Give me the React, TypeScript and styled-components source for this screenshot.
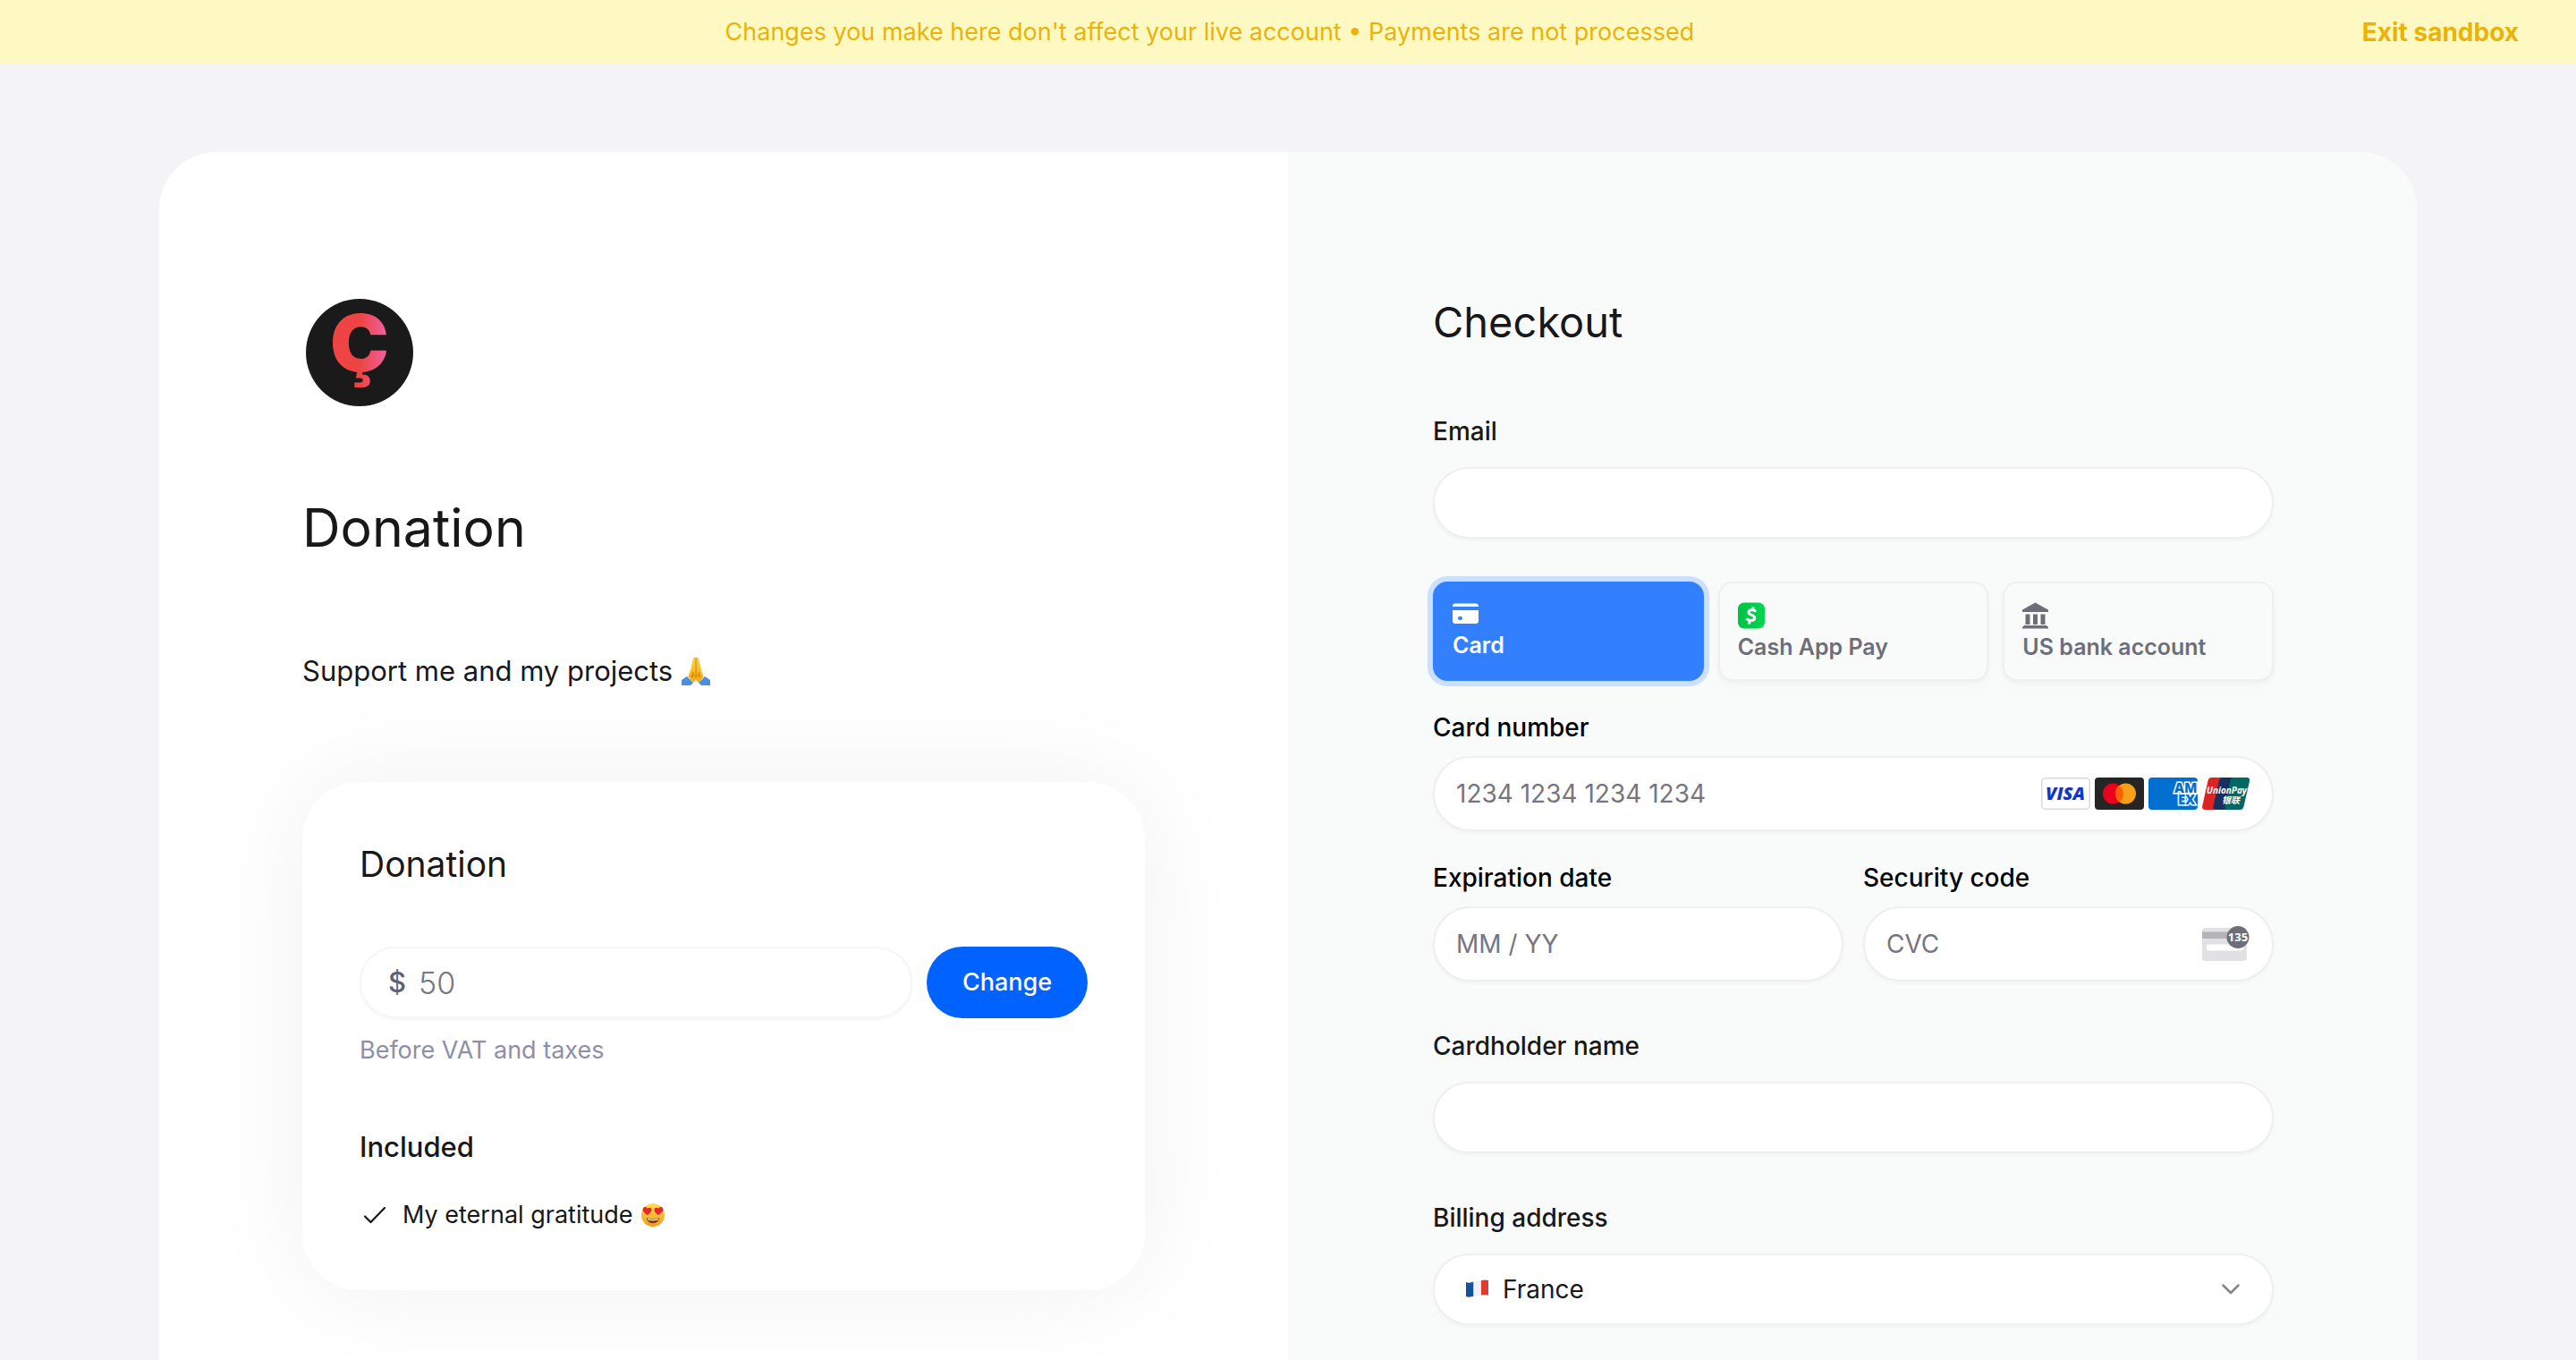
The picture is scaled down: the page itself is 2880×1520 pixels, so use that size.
import React from "react";
import styled, { createGlobalStyle, css } from "styled-components";

const color = {
  ink: "#18181b",
  muted: "#6d6e78",
  line: "#eeefee",
  blue: "#0062ff",
};

const GlobalStyle = createGlobalStyle`
  *, *::before, *::after { box-sizing: border-box; }
  body { margin: 0; background: #f4f4f6; color: ${color.ink}; font-family: Inter, "Liberation Sans", sans-serif; font-size: 28px; line-height: 40px; }
  h1, h2, h3, p, ul { margin: 0; padding: 0; }
  button, input, select { font: inherit; color: inherit; }
  svg { display: block; flex: none; }
`;

const Page = styled.div`
  display: flex;
  flex-direction: column;
  min-height: 100vh;
`;

const Banner = styled.header`
  display: flex;
  align-items: center;
  padding: 16px 64px;
  background: #fef9c3;
  color: #eab308;
`;

const BannerText = styled.p`
  flex: 1;
  font-size: 27px;
  text-align: center;
`;

const ExitLink = styled.a`
  color: inherit;
  font-weight: 700;
  text-decoration: none;
`;

const Sheet = styled.main`
  flex: 1;
  display: grid;
  grid-template-columns: repeat(2, minmax(0, 1fr));
  margin: 98px 178px 0;
  border-radius: 64px 64px 0 0;
  overflow: hidden;
`;

const Summary = styled.section`
  padding: 160px 160px 0;
  background: #fff;
`;

const Checkout = styled.section`
  padding: 162px 160px 38px 162px;
  background: #f9fbfa;
`;

const Logo = styled.svg`
  width: 128px;
  height: 128px;
  margin-bottom: 96px;
`;

const LogoLetter = styled.text`
  font-family: Inter, "Liberation Sans", sans-serif;
  font-size: 88px;
  font-weight: 900;
`;

const Title = styled.h1`
  font-size: 59px;
  line-height: 72px;
  font-weight: 400;
`;

const Description = styled.p`
  display: flex;
  align-items: center;
  gap: 10px;
  margin: 100px 0;
  font-size: 31px;
  line-height: 48px;
`;

const ProductCard = styled.article`
  padding: 64px;
  border-radius: 64px;
  background: #fff;
  box-shadow: 0 0 120px rgba(0, 0, 0, 0.06);
`;

const ProductName = styled.h2`
  margin-bottom: 64px;
  font-size: 39px;
  line-height: 56px;
  font-weight: 400;
`;

const AmountForm = styled.form`
  display: flex;
  gap: 16px;
  margin-bottom: 16px;
`;

const pill = css`
  border: 2px solid ${color.line};
  border-radius: 42px;
  background: #fff;
  box-shadow: 0 2px 4px rgba(0, 0, 0, 0.04);
`;

const AmountField = styled.label`
  ${pill}
  flex: 1;
  min-width: 0;
  height: 80px;
  display: flex;
  align-items: center;
  gap: 14px;
  padding: 0 30px;
  border-color: #f6f6f7;
  color: #5f6178;
  font-size: 31px;
  font-weight: 500;
`;

const BareInput = styled.input<{ $large?: boolean }>`
  flex: 1;
  min-width: 0;
  height: 100%;
  padding: 0;
  border: 0;
  outline: 0;
  background: none;
  font-size: ${(p) => (p.$large ? "34px" : "28px")};
  font-weight: ${(p) => (p.$large ? 300 : 400)};
  &::placeholder { color: #757680; opacity: 1; }
`;

const ChangeButton = styled.button`
  width: 180px;
  height: 80px;
  border: 0;
  border-radius: 40px;
  background: ${color.blue};
  color: #fff;
  font-size: 27px;
  font-weight: 500;
`;

const Note = styled.p`
  margin-bottom: 64px;
  color: #8b8fa9;
  font-size: 27px;
`;

const IncludedTitle = styled.h3`
  margin-bottom: 32px;
  font-size: 31px;
  line-height: 48px;
  font-weight: 500;
`;

const Benefits = styled.ul`
  list-style: none;
`;

const Benefit = styled.li`
  display: flex;
  align-items: center;
  gap: 8px;
  font-size: 27px;
`;

const BenefitIcon = styled.span`
  width: 40px;
  padding-left: 4px;
`;

const CheckoutTitle = styled.h2`
  margin-bottom: 74px;
  font-size: 47px;
  line-height: 56px;
  font-weight: 400;
`;

const Field = styled.div`
  & + & { margin-top: 52px; }
`;

const Label = styled.label`
  display: block;
  margin-bottom: 20px;
  font-size: 28px;
  font-weight: 500;
`;

const CardLabel = styled.label`
  display: block;
  margin-bottom: 12px;
  color: #000;
  font-weight: 450;
`;

const TextInput = styled.input`
  ${pill}
  display: block;
  width: 100%;
  height: 80px;
  padding: 0 32px;
`;

const Methods = styled.div`
  display: grid;
  grid-template-columns: repeat(3, minmax(0, 1fr));
  gap: 16px;
  margin: 48px 0 32px;
`;

const Method = styled.button<{ $active?: boolean }>`
  display: flex;
  flex-direction: column;
  gap: 6px;
  padding: 21px 20px 22px;
  border: 2px solid ${color.line};
  border-radius: 16px;
  background: #f9fbfa;
  box-shadow: 0 2px 4px rgba(0, 0, 0, 0.03), 0 6px 12px rgba(0, 0, 0, 0.02);
  color: ${color.muted};
  font-size: 25px;
  line-height: 28px;
  font-weight: 600;
  text-align: left;
  ${(p) =>
    p.$active &&
    css`
      gap: 4px;
      border-color: #3380ff;
      background: #3380ff;
      color: #fff;
      box-shadow: 0 0 0 6px #ccdfff;
    `}
`;

const CardFields = styled.div`
  display: grid;
  grid-template-columns: repeat(2, minmax(0, 1fr));
  gap: 32px 22px;
  margin-bottom: 52px;
`;

const CardField = styled.div<{ $wide?: boolean }>`
  grid-column: ${(p) => (p.$wide ? "1 / -1" : "auto")};
`;

const CardBox = styled.div`
  ${pill}
  height: 84px;
  display: flex;
  align-items: center;
  padding: 0 24px;
`;

const Brands = styled.div`
  display: flex;
  gap: 5px;
`;

const CountryBox = styled.div`
  ${pill}
  height: 80px;
  display: flex;
  align-items: center;
  padding: 0 36px 0 32px;
`;

const CountrySelect = styled.select`
  flex: 1;
  height: 100%;
  margin-left: 12px;
  padding: 0;
  border: 0;
  outline: 0;
  background: none;
  appearance: none;
`;

const MarkText = styled.text<{ $size: number; $weight?: number; $italic?: boolean }>`
  font-family: "Open Sans", "Noto Sans CJK SC", sans-serif;
  font-size: ${(p) => p.$size}px;
  font-weight: ${(p) => p.$weight ?? 700};
  font-style: ${(p) => (p.$italic ? "italic" : "normal")};
`;

function BrandLogo() {
  return (
    <Logo viewBox="0 0 128 128" role="img" aria-label="Ç">
      <defs>
        <linearGradient id="logo-ink" x1="0" x2="1">
          <stop offset="0.52" stopColor="#ef4444" />
          <stop offset="1" stopColor="#f064a8" />
        </linearGradient>
      </defs>
      <circle cx="64" cy="64" r="60" fill="#1a1a1a" />
      <LogoLetter x="64" y="85" textAnchor="middle" fill="url(#logo-ink)">Ç</LogoLetter>
    </Logo>
  );
}

function PrayingHands() {
  return (
    <svg width="32" height="32" viewBox="0 0 32 32" role="img" aria-label="🙏">
      <defs>
        <linearGradient id="hand" x1="0" x2="0" y1="0" y2="1">
          <stop offset="0" stopColor="#ffd13b" />
          <stop offset="1" stopColor="#f7a90c" />
        </linearGradient>
      </defs>
      <path d="M0 26 6 22l7 7-3 3H0zM32 26l-6-4-7 7 3 3h10z" fill="#4a90dc" />
      <path d="M15.7 1c-1.400-1-2.500 0-2.800 1.600L10.500 13 7.500 22.500l5.500 6.500 3-3.500zM16.300 1c1.400-1 2.500 0 2.800 1.600L21.500 13l3 9.500-5.500 6.500-3-3.500z" fill="url(#hand)" />
      <path d="M16 1v23M13 17l-1.500 6 3.500-3M19 17l1.500 6-3.500-3" fill="none" stroke="#c87800" strokeWidth="1" />
    </svg>
  );
}

function HeartEyes() {
  return (
    <svg width="28" height="28" viewBox="0 0 28 28" role="img" aria-label="😍">
      <defs>
        <linearGradient id="face" x1="0" x2="0" y1="0" y2="1">
          <stop offset="0" stopColor="#ffe04d" />
          <stop offset="1" stopColor="#f39a1e" />
        </linearGradient>
      </defs>
      <circle cx="14" cy="14" r="13" fill="url(#face)" />
      <path d="M8 14C3 11 2 8.500 3 6.500c1.200-2.200 4-1.700 4.800.300C9.500 4.800 12.500 5.500 12.500 8c0 2.400-2 4.200-4.500 6z" fill="#e8262d" />
      <path d="M20 14c5-3 6-5.500 5-7.500-1.200-2.200-4-1.700-4.800.300C18.500 4.800 15.500 5.500 15.500 8c0 2.400 2 4.200 4.500 6z" fill="#e8262d" />
      <path d="M7 17q7 3 14 0c0 8-14 8-14 0z" fill="#7a3d0c" />
      <path d="M8 18q6 2 12 0v1.300q-6 1.700-12 0z" fill="#fff" />
    </svg>
  );
}

function CheckIcon() {
  return (
    <svg width="26" height="22" viewBox="0 0 26 22" fill="none" stroke={color.ink} strokeWidth="2.200" strokeLinecap="round" strokeLinejoin="round" aria-hidden="true">
      <path d="M2 12.500 8.500 19 24 3" />
    </svg>
  );
}

function CardIcon() {
  return (
    <svg width="30" height="30" viewBox="0 0 30 30" fill="#fff" aria-hidden="true">
      <path d="M3 1.500h23a3 3 0 0 1 3 3V5H0v-.5a3 3 0 0 1 3-3z" />
      <path fillRule="evenodd" d="M0 9h29v12a3 3 0 0 1-3 3H3a3 3 0 0 1-3-3zm8 7a2 2 0 0 0-2 2 2 2 0 0 0 2 2h1a2 2 0 0 0 2-2 2 2 0 0 0-2-2z" />
    </svg>
  );
}

function CashAppIcon() {
  return (
    <svg width="30" height="30" viewBox="0 0 30 30" aria-hidden="true">
      <defs>
        <linearGradient id="cash" x1="0" x2="1">
          <stop offset="0" stopColor="#00c244" />
          <stop offset="1" stopColor="#00d64f" />
        </linearGradient>
      </defs>
      <rect y="0.500" width="30" height="29" rx="7" fill="url(#cash)" />
      <g fill="none" stroke="#fff" strokeWidth="3">
        <path d="M20.300 10.500c-2.300-2.100-7.800-2.500-8.300.7-.5 3.600 7.300 2.700 6.800 6.500-.5 3.600-6.700 3.300-9.300.7" />
        <path d="m17.200 5.500-.6 3M13.300 21l-.7 3.500" />
      </g>
    </svg>
  );
}

function BankIcon() {
  return (
    <svg width="30" height="30" viewBox="0 0 30 30" fill={color.muted} aria-hidden="true">
      <path d="M14.500.500 29 8.500v2.500H0V8.500zM3.500 13.500h5V25h-5zM12 13.500h5V25h-5zM20.500 13.500h5V25h-5zM2 26h25l2 2v1.500H0V28z" />
    </svg>
  );
}

function VisaMark() {
  return (
    <svg width="55" height="36" viewBox="0 0 55 36" role="img" aria-label="Visa">
      <rect x="0.750" y="0.750" width="53.500" height="34.500" rx="4" fill="#fff" stroke="#d9d9dc" strokeWidth="1.500" />
      <MarkText $size={20} $weight={800} $italic x="27" y="25" textAnchor="middle" fill="#1434cb">VISA</MarkText>
    </svg>
  );
}

function MastercardMark() {
  return (
    <svg width="55" height="36" viewBox="0 0 55 36" role="img" aria-label="Mastercard">
      <rect width="55" height="36" rx="4" fill="#252525" />
      <circle cx="20.500" cy="18" r="11.500" fill="#eb001b" />
      <circle cx="34.500" cy="18" r="11.500" fill="#f79e1b" />
      <path d="M27.500 8.900a11.500 11.500 0 0 1 0 18.200 11.500 11.500 0 0 1 0-18.200z" fill="#ff5f00" />
    </svg>
  );
}

function AmexMark() {
  return (
    <svg width="55" height="36" viewBox="0 0 55 36" role="img" aria-label="American Express">
      <defs>
        <clipPath id="amex-clip"><rect width="55" height="36" rx="4" /></clipPath>
      </defs>
      <g clipPath="url(#amex-clip)">
        <rect width="55" height="36" fill="#016fd0" />
        <MarkText $size={15} $weight={800} fill="#016fd0" stroke="#fff" strokeWidth="3" paintOrder="stroke">
          <tspan x="29" y="17">AM</tspan>
          <tspan x="33" y="30">EX</tspan>
        </MarkText>
      </g>
    </svg>
  );
}

function UnionPayMark() {
  return (
    <svg width="54" height="36" viewBox="0 0 54 36" role="img" aria-label="UnionPay">
      <path d="M11 0h16l-7 36H3.500C1 36-.3 34.500.200 32L6.500 3.500C7 1 8.500 0 11 0z" fill="#dd2423" />
      <path d="M23.500 0H38l-7 36H15.500c-2.500 0-3.500-1.500-3-4L19 3.500C19.500 1 21 0 23.500 0z" fill="#16315f" />
      <path d="M36 0h14c2.500 0 3.500 1.500 3 4l-6.500 28.500c-.5 2.500-2 3.500-4.500 3.500H28.500c-2.500 0-3.500-1.500-3-4L31.500 3.500C32 1 33.500 0 36 0z" fill="#036862" />
      <MarkText $size={10} $italic fill="#fff">
        <tspan x="5" y="18">UnionPay</tspan>
        <tspan x="22" y="29">银联</tspan>
      </MarkText>
    </svg>
  );
}

function CvcIcon() {
  return (
    <svg width="54" height="40" viewBox="0 0 54 40" aria-hidden="true">
      <rect x="0" y="2" width="50" height="37" rx="4" fill="#e1e1e4" />
      <path d="M0 6.500h50V14H0z" fill="#b3b3b8" />
      <rect x="5" y="20.500" width="41" height="7" rx="2" fill="#fff" />
      <circle cx="40" cy="12.500" r="12.500" fill={color.muted} />
      <MarkText $size={13} x="40" y="17" textAnchor="middle" fill="#fff">135</MarkText>
    </svg>
  );
}

function FranceFlag() {
  return (
    <svg width="32" height="24" viewBox="0 0 32 24" role="img" aria-label="🇫🇷">
      <path d="M3 4c3 1 5 .8 8.500-.500v16C8 20.800 6 21 3 20z" fill="#16529c" />
      <path d="M11.500 3.500 20 2v16.500l-8.500 1.500z" fill="#f1f1f3" />
      <path d="M20 2c3-.9 5.500-.6 8 0v16.500c-3-.8-5-.8-8 0z" fill="#e0392f" />
    </svg>
  );
}

function Chevron() {
  return (
    <svg width="20" height="12" viewBox="0 0 20 12" fill="none" stroke="#858585" strokeWidth="2.500" strokeLinecap="round" strokeLinejoin="round" aria-hidden="true">
      <path d="m1.500 1.500 8.500 8.500 8.500-8.500" />
    </svg>
  );
}

export default function App() {
  return (
    <Page>
      <GlobalStyle />
      <Banner>
        <BannerText>Changes you make here don't affect your live account • Payments are not processed</BannerText>
        <ExitLink href="#exit">Exit sandbox</ExitLink>
      </Banner>
      <Sheet>
        <Summary>
          <BrandLogo />
          <Title>Donation</Title>
          <Description>
            Support me and my projects
            <PrayingHands />
          </Description>
          <ProductCard>
            <ProductName>Donation</ProductName>
            <AmountForm onSubmit={(e) => e.preventDefault()}>
              <AmountField>
                $
                <BareInput $large placeholder="50" aria-label="Amount" />
              </AmountField>
              <ChangeButton type="submit">Change</ChangeButton>
            </AmountForm>
            <Note>Before VAT and taxes</Note>
            <IncludedTitle>Included</IncludedTitle>
            <Benefits>
              <Benefit>
                <BenefitIcon><CheckIcon /></BenefitIcon>
                My eternal gratitude
                <HeartEyes />
              </Benefit>
            </Benefits>
          </ProductCard>
        </Summary>
        <Checkout>
          <CheckoutTitle>Checkout</CheckoutTitle>
          <Field>
            <Label htmlFor="email">Email</Label>
            <TextInput id="email" type="email" />
          </Field>
          <Methods>
            <Method type="button" $active aria-pressed="true"><CardIcon />Card</Method>
            <Method type="button"><CashAppIcon />Cash App Pay</Method>
            <Method type="button"><BankIcon />US bank account</Method>
          </Methods>
          <CardFields>
            <CardField $wide>
              <CardLabel htmlFor="number">Card number</CardLabel>
              <CardBox>
                <BareInput id="number" placeholder="1234 1234 1234 1234" />
                <Brands>
                  <VisaMark />
                  <MastercardMark />
                  <AmexMark />
                  <UnionPayMark />
                </Brands>
              </CardBox>
            </CardField>
            <CardField>
              <CardLabel htmlFor="expiry">Expiration date</CardLabel>
              <CardBox>
                <BareInput id="expiry" placeholder="MM / YY" />
              </CardBox>
            </CardField>
            <CardField>
              <CardLabel htmlFor="cvc">Security code</CardLabel>
              <CardBox>
                <BareInput id="cvc" placeholder="CVC" />
                <CvcIcon />
              </CardBox>
            </CardField>
          </CardFields>
          <Field>
            <Label htmlFor="name">Cardholder name</Label>
            <TextInput id="name" type="text" />
          </Field>
          <Field>
            <Label htmlFor="country">Billing address</Label>
            <CountryBox>
              <FranceFlag />
              <CountrySelect id="country" defaultValue="France">
                <option>France</option>
              </CountrySelect>
              <Chevron />
            </CountryBox>
          </Field>
        </Checkout>
      </Sheet>
    </Page>
  );
}
